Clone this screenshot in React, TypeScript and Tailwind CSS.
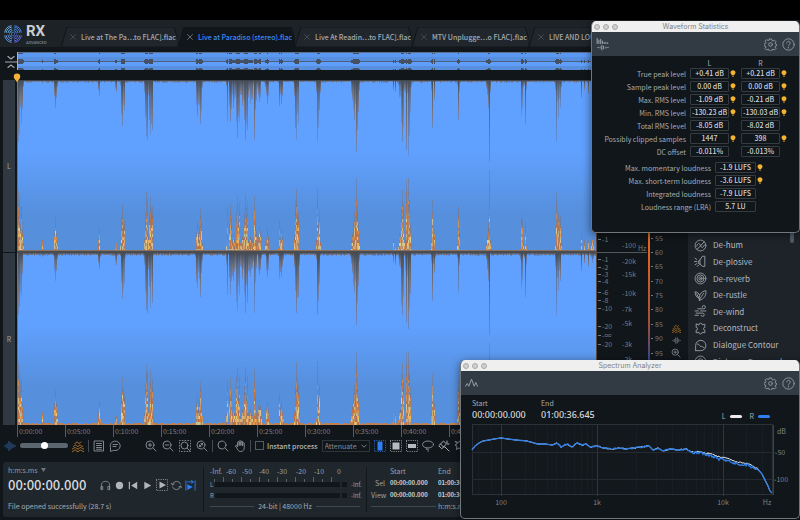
import React from "react";

const FONT = "font-['Noto_Sans_CJK_SC','Noto_Sans',sans-serif]";

/* ---------- waveform data ---------- */

const PLOT_W = 579;
const PLOT_H = 345;
const MID = 173;

// [x, half width, height at the bottom edge, depth at the top edge]
const PEAKS: [number, number, number, number][] = [
  [1, 1, 62, 62], [2, 1, 56, 54], [4, 1, 46, 44], [25, 0, 14, 4],
  [38, 1, 36, 28], [39, 0, 12, 18], [81, 0, 14, 10], [82, 0, 24, 16],
  [98, 0, 7, 9], [99, 0, 9, 12], [105, 1, 47, 46], [107, 0, 32, 30],
  [129, 1, 60, 57], [130, 0, 54, 60], [133, 1, 55, 55], [135, 0, 46, 50],
  [180, 1, 30, 36], [183, 1, 43, 44], [210, 0, 44, 42], [213, 1, 48, 42],
  [216, 2, 18, 28], [220, 1, 57, 58], [222, 0, 50, 42], [225, 2, 16, 26],
  [228, 1, 58, 60], [230, 0, 50, 50], [233, 2, 16, 24], [237, 0, 56, 60],
  [238, 1, 30, 30], [242, 1, 26, 22], [250, 1, 24, 24], [262, 0, 32, 26],
  [264, 1, 24, 24], [279, 1, 63, 60], [281, 0, 40, 44], [300, 0, 64, 62],
  [301, 1, 30, 48], [302, 0, 42, 30], [335, 1, 20, 20], [337, 1, 40, 40],
  [339, 0, 74, 72], [340, 1, 46, 50], [376, 0, 13, 10], [378, 0, 10, 12],
  [384, 2, 28, 26], [385, 1, 62, 62], [389, 0, 72, 70], [391, 0, 74, 76],
  [392, 1, 52, 56], [415, 0, 52, 48], [417, 0, 22, 20], [441, 0, 46, 40],
  [442, 0, 20, 12], [471, 1, 30, 28], [472, 0, 82, 82], [504, 0, 38, 36],
  [505, 0, 32, 28], [508, 0, 30, 44], [539, 0, 60, 62], [541, 1, 39, 38],
  [543, 0, 36, 28], [564, 0, 18, 18], [567, 0, 12, 10], [571, 0, 12, 14], [575, 1, 14, 10],
];

function noise(n: number) {
  const s = Math.sin(n * 12.9898) * 43758.5453;
  return s - Math.floor(s);
}

type Bar = { x: number; up: number; down: number };

function makeBars(seed: number): Bar[] {
  const bars: Bar[] = [];
  for (let x = 0; x < PLOT_W; x++) {
    let up = 1 + noise(x + seed) * 1.4;
    let down = 1.5 + noise(x * 3 + seed) * 1.5;
    for (const [px, hw, u, d] of PEAKS) {
      const dist = Math.abs(x - px);
      if (dist > hw + 1) continue;
      const fall = dist === 0 ? 1 : dist <= hw ? 0.45 + noise(x + seed * 7) * 0.4 : noise(x + seed * 5) * 0.3;
      up = Math.max(up, u * fall);
      down = Math.max(down, d * fall);
    }
    bars.push({ x, up, down });
  }
  return bars;
}

const LEFT = makeBars(3);
const RIGHT = makeBars(11);

const HOT = ["#e8933c", "#f2b558", "#d57a38", "#ecd07a", "#c56f35"];
const WARM = ["#c9743c", "#b5714a", "#dd8a3e", "#9b7563", "#c08a58"];
const COOL = ["#7d7480", "#8a7473", "#6f7890", "#6c7fa6"];
const CELL = 3;

function FlameBar({ x, bottom, height }: { x: number; bottom: number; height: number }) {
  if (height < 5) return <rect x={x} y={bottom - height} width="1" height={height} fill="#bf8152" />;
  const cells = [];
  for (let h = 0; h < height; h += CELL) {
    const rel = h / height;
    const size = Math.min(CELL, height - h);
    const n = noise(x * 31 + h * 7 + bottom);
    const abs = h + n * 14;
    const set = abs < 34 && rel < 0.6 ? HOT : rel < 0.7 && abs < 52 ? WARM : COOL;
    cells.push(
      <rect
        key={h}
        x={x}
        y={bottom - h - size}
        width="1"
        height={size}
        fill={set[Math.floor(noise(x * 17 + h * 3 + bottom) * set.length)]}
        opacity={rel > 0.8 ? 0.55 : 0.62 + noise(x * 5 + h) * 0.38}
      />,
    );
  }
  return <g>{cells}</g>;
}

function Waveform() {
  return (
    <svg
      className="block min-h-0 w-full flex-1"
      viewBox={`0 0 ${PLOT_W} ${PLOT_H}`}
      preserveAspectRatio="none"
      shapeRendering="crispEdges"
      aria-label="Waveform"
    >
      <defs>
        <linearGradient id="sky" x1="0" y1="0" x2="0" y2="1">
          <stop offset="0" stopColor="#60a0fe" />
          <stop offset="0.42" stopColor="#60a0fe" />
          <stop offset="0.78" stopColor="#568fdc" />
          <stop offset="1" stopColor="#568fdc" />
        </linearGradient>
        <linearGradient id="smoke" x1="0" y1="0" x2="0" y2="1">
          <stop offset="0" stopColor="#454b54" />
          <stop offset="0.35" stopColor="#5a6577" />
          <stop offset="0.7" stopColor="#7b7680" />
          <stop offset="1" stopColor="#628ad0" />
        </linearGradient>
        <linearGradient id="haze" x1="0" y1="0" x2="0" y2="1">
          <stop offset="0" stopColor="#454b54" />
          <stop offset="0.3" stopColor="#5c6f92" />
          <stop offset="1" stopColor="#6090dd" />
        </linearGradient>
      </defs>
      {[
        { bars: LEFT, top: 0, bottom: MID - 1 },
        { bars: RIGHT, top: MID, bottom: PLOT_H },
      ].map(({ bars, top, bottom }) => (
        <g key={top}>
          <rect x="0" y={top} width={PLOT_W} height={bottom - top} fill="url(#sky)" />
          {bars.map((b) => (
            <g key={b.x}>
              <rect
                x={b.x}
                y={top}
                width="1"
                height={b.down}
                fill={noise(b.x + top) > 0.4 ? "url(#smoke)" : "url(#haze)"}
              />
              <FlameBar x={b.x} bottom={bottom} height={b.up} />
            </g>
          ))}
        </g>
      ))}
      <rect x="0" y="0" width="1" height={PLOT_H} fill="#77746f" />
      <rect x="0" y="0" width={PLOT_W} height="1" fill="#3f464e" />
      <rect x="0" y={MID - 3} width={PLOT_W} height="1" fill="#8a705f" />
      <rect x="0" y={MID - 2} width={PLOT_W} height="2" fill="#4b4c50" />
    </svg>
  );
}

function Overview() {
  return (
    <svg
      className="block h-[18px] w-full flex-none"
      viewBox={`0 0 ${PLOT_W} 18`}
      preserveAspectRatio="none"
      shapeRendering="crispEdges"
      aria-label="Overview"
    >
      <rect width={PLOT_W} height="9" fill="#5b98f1" />
      <rect y="5" width={PLOT_W} height="4" fill="#568fdf" />
      <rect y="9" width={PLOT_W} height="9" fill="#5f9ffb" />
      <rect y="14" width={PLOT_W} height="4" fill="#588fdf" />
      <rect y="9" width={PLOT_W} height="1" fill="#4c5f7d" />
      {LEFT.filter((b) => b.up > 6).map((b) => {
        const h = b.up > 20 ? 2 : 1;
        return (
          <g key={b.x} fill="#455062">
            <rect x={b.x} y={9 - h} width="1" height={h * 2 + 1} />
            <rect x={b.x} y="0" width="1" height={h} />
            <rect x={b.x} y={18 - h} width="1" height={h} />
          </g>
        );
      })}
      <rect width={PLOT_W} height="1" fill="#5b6f8f" />
      <rect width="1" height="18" fill="#c7b36c" />
    </svg>
  );
}

/* ---------- icons ---------- */

type IconProps = { className?: string; children: React.ReactNode };

function Icon({ className = "size-[14px] text-[#8b9299]", children }: IconProps) {
  return (
    <svg
      className={`block flex-none ${className}`}
      viewBox="0 0 24 24"
      fill="none"
      stroke="currentColor"
      strokeWidth="1.8"
      strokeLinecap="round"
      strokeLinejoin="round"
      aria-hidden="true"
    >
      {children}
    </svg>
  );
}

function Logo() {
  const quads = [
    { r: 0, c: "#3f86e6" },
    { r: 90, c: "#5a6be0" },
    { r: 180, c: "#5f8fd8" },
    { r: 270, c: "#5fa6d6" },
  ];
  return (
    <svg className="size-[18px] flex-none" viewBox="0 0 36 36" fill="none" strokeWidth="2" aria-hidden="true">
      {quads.map((q) => (
        <g key={q.r} transform={`rotate(${q.r} 18 18)`} stroke={q.c}>
          {[3.5, 7, 10.5, 14, 17].map((r) => (
            <path
              key={r}
              d={`M${18 + r * 0.17} ${18 - r * 0.985} A${r} ${r} 0 0 1 ${18 + r * 0.985} ${18 - r * 0.17}`}
            />
          ))}
        </g>
      ))}
    </svg>
  );
}

const flames = (
  <>
    <path d="M6 7c2 0 2-3 4-3s2 3 4 3 2-3 4-3" />
    <path d="M3 13c2 0 2-3 4-3s3 3 5 3 2-3 4-3 2 3 5 3" />
    <path d="M1 18c2 0 3-3 5-3s3 3 6 3 3-3 5-3 3 3 6 3" />
    <path d="M1 23c2 0 3-3 5-3s3 3 6 3 3-3 5-3 3 3 6 3" />
  </>
);

function Bulb() {
  return (
    <svg className="block h-[7px] w-[6px] flex-none" viewBox="0 0 12 14" aria-label="Marker">
      <path d="M6 .5C2.900.5 1 2.700 1 5.200c0 2.300 2 3.700 2.700 5.500h4.600C9 8.900 11 7.500 11 5.200 11 2.700 9.100.5 6 .5Z" fill="#f3b230" />
      <path d="M4.200 11.500h3.600L7 13.800H5Z" fill="#c98c22" />
    </svg>
  );
}

function GearIcon() {
  return (
    <Icon className="size-[13px] text-[#8d959d]">
      <circle cx="12" cy="12" r="3.400" />
      <path d="M10 1.800h4l.7 2.900 2 .9 2.600-1.600 2.800 2.800-1.600 2.600.8 2 2.900.7v0l-.1 2-2.800.7-.8 2 1.600 2.600-2.800 2.800-2.600-1.600-2 .8-.7 2.900h-4l-.7-2.900-2-.8-2.600 1.600-2.800-2.800 1.600-2.600-.8-2-2.900-.7v-3l2.900-.7.8-2-1.600-2.600 2.800-2.800 2.600 1.600 2-.9Z" />
    </Icon>
  );
}

function HelpIcon() {
  return (
    <Icon className="size-[13px] text-[#8d959d]">
      <circle cx="12" cy="12" r="10.500" />
      <path d="M8.800 9.200a3.200 3.200 0 1 1 4.800 2.800c-1.100.7-1.600 1.200-1.600 2.600" />
      <path d="M12 18v.1" strokeWidth="2.400" />
    </Icon>
  );
}

/* ---------- header ---------- */

const TABS = [
  "Live at The Pa…to FLAC].flac",
  "Live at Paradiso (stereo).flac",
  "Live At Readin…to FLAC].flac",
  "MTV Unplugge…o FLAC].flac",
  "LIVE AND LOUD",
];

function Header() {
  return (
    <header className="flex h-8 flex-none items-start bg-[#1d2227] shadow-[inset_0_-5px_0_#11161a]">
      <div className="flex w-[61px] flex-none items-center gap-1 pt-[2px] pl-1">
        <Logo />
        <div className="flex flex-col">
          <span className="font-['Roboto',sans-serif] text-[15px] leading-[18px] font-bold text-[#c9cdd1]">RX</span>
          <span className="font-['Roboto',sans-serif] text-[4px] leading-[5px] font-medium text-[#7f868d]">ADVANCED</span>
        </div>
      </div>
      <nav className="mt-[7px] flex min-w-0 flex-1 overflow-hidden">
        {TABS.map((t, i) => {
          const active = i === 1;
          return (
            <button
              key={t}
              className={`relative flex h-5 w-[117px] flex-none items-center gap-[5px] pl-[9px] text-[7px] leading-[10px] font-medium whitespace-nowrap ${
                active ? "text-[#3b8af5]" : "text-[#a4abb1]"
              }`}
            >
              <svg className="absolute inset-0 size-full" viewBox="0 0 117 20" preserveAspectRatio="none" aria-hidden="true">
                <path
                  d="M0 20 L6 0 H113 L117 12 V20 Z"
                  fill={active ? "#11161a" : "#20262b"}
                  stroke="#11161a"
                />
              </svg>
              <Icon className={`relative size-[6px] ${active ? "text-[#7d858c]" : "text-[#4c545b]"}`}>
                <path d="M2 2l20 20M22 2L2 22" strokeWidth="3" />
              </Icon>
              <span className="relative">{t}</span>
            </button>
          );
        })}
      </nav>
    </header>
  );
}

/* ---------- scales ---------- */

const AMP: [number, string][] = [
  [190, "-1"], [210, "-1"], [218, "-2"], [225, "-3"], [232, "-4"],
  [243, "-6"], [251, "-8"], [259, "-10"], [277, "-20"], [286, "-∞"], [295, "-20"],
];
const FREQ: [number, string][] = [
  [193, "-100"], [209, "-20k"], [222, "-15k"], [241, "-10k"], [257, "-7k"], [271, "-5k"], [292, "-3k"], [307, "-2k"],
];
const LEVEL: [number, string][] = [
  [186, "55"], [200, "60"], [214, "65"], [229, "70"], [243, "75"], [257, "80"], [272, "85"], [286, "90"], [301, "95"],
];

function Scales() {
  return (
    <div className="flex w-[92px] flex-none bg-[#11161a]">
      <svg className="h-[385px] w-[69px] flex-none text-[7px]" viewBox="0 0 69 385" fill="#737b82" aria-label="Scales">
        <defs>
          <linearGradient id="heat" x1="0" y1="0" x2="0" y2="1">
            <stop offset="0" stopColor="#f0a13a" />
            <stop offset="0.5" stopColor="#e0641f" />
            <stop offset="0.7" stopColor="#a4513a" />
            <stop offset="0.82" stopColor="#2c4689" />
            <stop offset="1" stopColor="#121a3c" />
          </linearGradient>
        </defs>
        <rect x="0" y="28" width="1" height="345" fill="#5a4a40" />
        <rect x="1" y="200" width="50" height="1" fill="#50575d" />
        {AMP.map(([y, t], i) => (
          <g key={i}>
            <rect x="2" y={y - 3} width="3" height="1" />
            <text x="6" y={y}>{t}</text>
          </g>
        ))}
        {FREQ.map(([y, t]) => (
          <text key={t} x="26" y={y + 3}>{t}</text>
        ))}
        <text x="42" y="199">Hz</text>
        <rect x="52" y="28" width="2" height="345" fill="url(#heat)" />
        {LEVEL.map(([y, t]) => (
          <g key={t}>
            <rect x="55" y={y} width="2" height="1" />
            <text x="59" y={y + 3}>{t}</text>
          </g>
        ))}
      </svg>
      <div className="flex flex-1 flex-col items-center gap-[3px] pt-[272px] pr-px">
        <Icon className="size-[9px] text-[#c98028]">{flames}</Icon>
        <Icon className="size-[9px] text-[#8b9299]">
          <path d="M2 12v0M6 9v6M10 5v14M14 5v14M18 9v6M22 12v0" />
        </Icon>
        <Icon className="size-[10px] text-[#8b9299]">
          <circle cx="10" cy="10" r="7.500" /><path d="M16 16l6 6M10 7v6M7 10h6" />
        </Icon>
      </div>
    </div>
  );
}

/* ---------- modules ---------- */

const MODULES: [string, React.ReactNode][] = [
  ["De-hum", <><circle cx="12" cy="12" r="10" /><path d="M5 13c2-6 5-6 7-1s5 5 7-1M6 19L19 5" /></>],
  ["De-plosive", <><path d="M20 3v18h-4l-5-4V9l4-6Z" /><path d="M11 9l-3 2v5l3 1M2 6l3 2M1 12h4M2 18l3-2M6 21l2-2" /></>],
  ["De-reverb", <><circle cx="12" cy="12" r="10" /><circle cx="12" cy="12" r="6.500" /><circle cx="12" cy="12" r="3" /><circle cx="12" cy="12" r="0.600" /></>],
  ["De-rustle", <><path d="M10 21C8 12 12 5 22 3c1 9-3 15-12 18ZM10 21c2-6 5-9 8-13" /><path d="M9 17C4 15 2 11 2 5c5 1 7 3 8 6M9 17L5 9" /></>],
  ["De-wind", <><path d="M7 7h11a3 3 0 1 0-3-3M2 11h6M12 11h10M4 15h12a3 3 0 1 1-3 4M2 19h6" /></>],
  ["Deconstruct", <path d="M9 5a3 3 0 1 1 6 0l5-1v6a2.500 2.500 0 1 0 0 5v5l-5-1a3 3 0 1 1-6 0l-5 1v-5a2.500 2.500 0 1 0 0-5V4Z" />],
  ["Dialogue Contour", <><path d="M3 21V12a9.500 9.500 0 1 1 9 9.500H3Z" /><path d="M6 9c4-1 4 6 8 5s3 3 5 3" /></>],
  ["Dialogue De-reverb", <><circle cx="12" cy="12" r="10" /><circle cx="12" cy="12" r="5" /></>],
];

function Modules() {
  return (
    <aside className="flex w-[112px] flex-none bg-[#1d2329]">
      <ul className="mt-[185px] grid h-[133px] min-w-0 flex-1 grid-rows-8 overflow-hidden pl-[6px]">
        {MODULES.map(([name, art]) => (
          <li key={name} className="flex min-h-0 items-center">
            <button className="flex items-center gap-[6px] text-[8px] leading-3 whitespace-nowrap text-[#b4bac0]">
              <Icon className="size-[13px] text-[#90979e]">{art}</Icon>
              {name}
            </button>
          </li>
        ))}
      </ul>
      <div className="mt-[168px] mr-[6px] h-[23px] w-1 rounded-full bg-[#505c66]" />
    </aside>
  );
}

/* ---------- editor ---------- */

const TIMES = Array.from({ length: 12 }, (_, i) => `0:${String(i * 5).padStart(2, "0")}:00`);

function Editor() {
  return (
    <main className="flex min-h-0 flex-1 overflow-hidden bg-[#11161a]">
      <div className="flex w-[17px] flex-none flex-col items-start pl-[3px]">
        <div className="flex h-7 w-[15px] items-start justify-center pt-1">
          <Icon className="size-[12px] text-[#a2a8ad]">
            <path d="M6 1l6 5 6-5M1 12h22M6 23l6-5 6 5" strokeWidth="2.400" />
          </Icon>
        </div>
        <div className="flex w-3 flex-1 items-center justify-center border-b border-[#11161a] bg-[#303941] text-[7px] text-[#9aa1a7]">
          L
        </div>
        <div className="flex w-3 flex-1 items-center justify-center bg-[#303941] text-[7px] text-[#9aa1a7]">
          R
        </div>
        <div className="h-3 w-3 flex-none" />
      </div>
      <section className="relative flex min-w-0 flex-1 flex-col">
        <Overview />
        <div className="h-[10px] flex-none" />
        <Waveform />
        <div className="flex h-3 flex-none overflow-hidden">
          {TIMES.map((t) => (
            <span key={t} className="w-12 flex-none border-l border-[#555d64] pl-px text-[7px] leading-3 text-[#7b8288]">
              {t}
            </span>
          ))}
        </div>
        <svg className="absolute top-[21px] -left-1 h-[10px] w-2" viewBox="0 0 16 20" aria-label="Playhead">
          <path d="M8 1a6.500 6.500 0 0 1 6.500 6.500C14.500 12 10 14 8 19 6 14 1.500 12 1.500 7.500A6.500 6.500 0 0 1 8 1Z" fill="#f3b13a" />
        </svg>
      </section>
      <Scales />
      <Modules />
    </main>
  );
}

/* ---------- toolbar ---------- */

function ToolButton({ label, children }: { label: string; children: React.ReactNode }) {
  return (
    <button aria-label={label} className="flex-none">
      {children}
    </button>
  );
}

const lens = <><circle cx="10" cy="10" r="8" /><path d="M16 16l6 6" /></>;

function Toolbar() {
  return (
    <div className="flex h-5 flex-none items-center overflow-hidden bg-[#11161a] pb-[3px] pl-1">
      <Icon className="size-3 text-[#3a78c9]">
        <path d="M2 11v2M6 8v8M10 3v18M14 6v12M18 9v6M22 11v2" strokeWidth="1.500" />
      </Icon>
      <input
        type="range"
        aria-label="Waveform and spectrogram blend"
        defaultValue={50}
        className="mx-1 h-[7px] w-12 flex-none appearance-none bg-transparent [&::-webkit-slider-runnable-track]:h-[5px] [&::-webkit-slider-runnable-track]:rounded-full [&::-webkit-slider-runnable-track]:bg-[#5c666e] [&::-webkit-slider-thumb]:-mt-px [&::-webkit-slider-thumb]:size-[7px] [&::-webkit-slider-thumb]:appearance-none [&::-webkit-slider-thumb]:rounded-full [&::-webkit-slider-thumb]:bg-white"
      />
      <ToolButton label="Spectrogram"><Icon className="size-3 text-[#c98028]">{flames}</Icon></ToolButton>
      <span className="mx-1 h-3 w-px bg-[#434b52]" />
      <div className="flex gap-1">
        <ToolButton label="Report">
          <Icon className="size-3 text-[#8b9299]"><path d="M3 2h18v20H3ZM7 7h10M7 11h10M7 15h10M7 18.500h10" /></Icon>
        </ToolButton>
        <ToolButton label="Comment">
          <Icon className="size-3 text-[#8b9299]"><path d="M3 22v-7a10 9.500 0 1 1 7 6Z" /><path d="M8 9h9M8 13h6" /></Icon>
        </ToolButton>
      </div>
      <div className="ml-6 flex gap-[5px]">
        <ToolButton label="Zoom in"><Icon className="size-3 text-[#8b9299]">{lens}<path d="M10 6.500v7M6.500 10h7" /></Icon></ToolButton>
        <ToolButton label="Zoom out"><Icon className="size-3 text-[#8b9299]">{lens}<path d="M6.500 10h7" /></Icon></ToolButton>
        <ToolButton label="Zoom selection"><Icon className="size-3 text-[#8b9299]"><path d="M1 1h22v22H1Z" strokeDasharray="1.500 4" /><circle cx="11" cy="11" r="7" /><path d="M16 16l6 6" /></Icon></ToolButton>
        <ToolButton label="Zoom all"><Icon className="size-3 text-[#8b9299]">{lens}<path d="M7 13l6-6M7 10v3h3M10 7h3v3" /></Icon></ToolButton>
      </div>
      <span className="mx-1 h-3 w-px bg-[#434b52]" />
      <div className="flex gap-[5px]">
        <ToolButton label="Zoom tool"><Icon className="size-3 text-[#8b9299]">{lens}</Icon></ToolButton>
        <ToolButton label="Hand tool">
          <Icon className="size-3 text-[#8b9299]">
            <path d="M7 13V5a1.700 1.700 0 0 1 3.400 0v6V3a1.700 1.700 0 0 1 3.400 0v8V4a1.700 1.700 0 0 1 3.400 0v8V7a1.700 1.700 0 0 1 3.400 0v8c0 5-3 8-7 8-5 0-6-3-8-7l-3-4c1-2 3-2 5 1" />
          </Icon>
        </ToolButton>
      </div>
      <span className="mx-1 h-3 w-px bg-[#434b52]" />
      <label className="flex flex-none items-center gap-[3px] text-[7px] leading-[10px] font-medium text-[#b0b6bb]">
        <input type="checkbox" className="size-[9px] appearance-none border border-[#535b62]" />
        Instant process
      </label>
      <div className="relative ml-1 flex-none">
        <select
          aria-label="Process type"
          className="block h-3 w-12 appearance-none border border-[#2e353b] bg-[#11161a] pl-[2px] text-[7px] leading-[10px] text-[#858c93]"
        >
          <option>Attenuate</option>
        </select>
        <svg className="pointer-events-none absolute top-[4px] right-[3px] h-1 w-[6px]" viewBox="0 0 12 8" fill="none" stroke="#858c93" strokeWidth="1.800" aria-hidden="true">
          <path d="M1 1.500l5 5 5-5" />
        </svg>
      </div>
      <div className="ml-1 flex gap-1">
        {[
          { n: "Time selection", c: "text-[#2f7ff2]", r: <rect x="7" y="3" width="10" height="18" fill="currentColor" stroke="none" /> },
          { n: "Time-frequency selection", c: "text-[#b4bac0]", r: <rect x="5" y="5" width="14" height="14" fill="currentColor" stroke="none" /> },
          { n: "Frequency selection", c: "text-[#b4bac0]", r: <rect x="4" y="8" width="16" height="8" fill="currentColor" stroke="none" /> },
        ].map((s) => (
          <ToolButton key={s.n} label={s.n}>
            <Icon className={`size-3 ${s.c}`}>
              <path d="M1 1h22v22H1Z" strokeDasharray="0.500 4" strokeWidth="1.500" />
              {s.r}
            </Icon>
          </ToolButton>
        ))}
        <ToolButton label="Lasso"><Icon className="size-3 text-[#8b9299]"><ellipse cx="12" cy="9" rx="11" ry="7" /><path d="M10 16c-3 1-2 4 1 3s2 2 1 4" /></Icon></ToolButton>
        <ToolButton label="Brush"><Icon className="size-3 text-[#b4bac0]"><path d="M2 11L11 2l6 6-9 9ZM5 8l7 7M13 13l9 9" /><path d="M18 2v4M22 8h-3" /></Icon></ToolButton>
        <ToolButton label="Magic wand"><Icon className="size-3 text-[#8b9299]"><path d="M3 3l5 2 4-3 1 5 5 2-4 4 1 5-5-2-5 3 1-6-4-3 4-2Z" /></Icon></ToolButton>
      </div>
    </div>
  );
}

/* ---------- transport ---------- */

const METER: [number, string][] = [
  [6, "-Inf."], [21, "-60"], [37, "-50"], [54, "-40"], [72, "-30"], [91, "-20"], [109, "-10"], [129, "0"],
];

function Transport() {
  return (
    <footer className="flex-none bg-[#11161a] px-[3px] pt-[5px] pb-[3px]">
      <div className="flex h-[55px] overflow-hidden rounded-[3px] bg-[#1f262c]">
        <div className="flex w-[200px] flex-none flex-col pt-[3px] pl-[5px]">
          <button className="flex items-center gap-[3px] text-[7px] leading-[10px] text-[#959ca2]">
            h:m:s.ms
            <svg className="h-1 w-[5px]" viewBox="0 0 10 8" fill="#6d757c" aria-hidden="true"><path d="M0 0h10L5 8Z" /></svg>
          </button>
          <div className="flex h-5 items-center">
            <span className="w-[92px] flex-none text-[13px] leading-5 font-medium text-[#d5d9dc]">00:00:00.000</span>
            <div className="flex items-center gap-[3px]">
              <ToolButton label="Monitor"><Icon className="size-[11px] text-[#8b9299]"><path d="M3 20v-8a9 9 0 0 1 18 0v8M3 14h3v7H3ZM18 14h3v7h-3Z" /></Icon></ToolButton>
              <ToolButton label="Record"><Icon className="size-[11px] text-[#b0b6bb]"><circle cx="12" cy="12" r="8" fill="currentColor" stroke="none" /></Icon></ToolButton>
              <ToolButton label="Rewind"><Icon className="size-[11px] text-[#b0b6bb]"><path d="M3 5v14" strokeWidth="2.500" /><path d="M20 4v16L7 12Z" fill="currentColor" stroke="none" /></Icon></ToolButton>
              <ToolButton label="Play"><Icon className="size-[11px] text-[#b0b6bb]"><path d="M5 4v16l15-8Z" fill="currentColor" stroke="none" /></Icon></ToolButton>
              <ToolButton label="Play selection"><Icon className="size-3 text-[#b0b6bb]"><path d="M1 1h22v22H1Z" strokeDasharray="0.500 4" strokeWidth="1.500" /><path d="M7 5v14l13-7Z" fill="currentColor" stroke="none" /></Icon></ToolButton>
              <ToolButton label="Loop"><Icon className="size-[11px] text-[#8b9299]"><path d="M3 10a9.500 9.500 0 0 1 18-1M21 14a9.500 9.500 0 0 1-18 1M1 7l2 4 4-2M23 17l-2-4-4 2" /></Icon></ToolButton>
              <ToolButton label="Follow playhead"><Icon className="size-[11px] text-[#2f7ff2]"><path d="M2 2v20M22 2v20M6 4h12M14 1l4 3-4 3" strokeWidth="2" /><path d="M5 9v13l12-6.500Z" fill="currentColor" stroke="none" /></Icon></ToolButton>
            </div>
          </div>
          <p className="mt-[6px] text-[7px] leading-[10px] text-[#a5acb2]">File opened successfully (28.7 s)</p>
        </div>
        <div className="my-[5px] w-px flex-none bg-[#12171b]" />
        <div className="flex w-[162px] flex-none flex-col pt-1 pl-[6px]">
          <svg className="h-[34px] w-[153px]" viewBox="0 0 153 34" fill="#9aa1a7" aria-label="Output meter">
            <g className="text-[7px]" textAnchor="middle">
              {METER.map(([x, t]) => <text key={t} x={x} y="8">{t}</text>)}
            </g>
            {Array.from({ length: 14 }, (_, i) => (
              <rect key={i} x={4 + i * 9} y={i % 2 ? 11 : 13} width="1" height={i % 2 ? 5 : 3} fill="#59616a" />
            ))}
            <g fill="#11161a">
              <rect x="5" y="16" width="125" height="5" /><rect x="132" y="16" width="5" height="5" />
              <rect x="5" y="27" width="125" height="5" /><rect x="132" y="27" width="5" height="5" />
            </g>
            <g className="text-[6px]">
              <text x="0" y="21">L</text><text x="0" y="32">R</text>
              <text x="141" y="21">-Inf.</text><text x="141" y="32">-Inf.</text>
            </g>
          </svg>
          <div className="mt-px flex w-[150px] items-center gap-1 text-[7px] leading-[10px] text-[#a5acb2]">
            <span className="h-px flex-1 bg-[#3f4950]" />
            24-bit | 48000 Hz
            <span className="h-px flex-1 bg-[#3f4950]" />
          </div>
        </div>
        <div className="my-[5px] w-px flex-none bg-[#12171b]" />
        <div className="flex flex-none flex-col pt-[3px] pl-[4px]">
          <table className="w-[112px] table-fixed text-left text-[7px] leading-[10px] text-[#9aa1a7]">
            <colgroup><col className="w-[19px]" /><col className="w-[48px]" /><col className="w-[45px]" /></colgroup>
            <thead>
              <tr className="h-3"><th /><th className="p-0 font-normal">Start</th><th className="p-0 font-normal">End</th></tr>
            </thead>
            <tbody>
              {["Sel", "View"].map((n) => (
                <tr key={n} className="h-3">
                  <th className="p-0 pr-[5px] text-right font-normal">{n}</th>
                  <td className="p-0 text-[6px] font-bold text-[#cdd1d4]">00:00:00.000</td>
                  <td className="p-0 text-[6px] font-bold text-[#cdd1d4]">01:00:36.645</td>
                </tr>
              ))}
            </tbody>
          </table>
          <div className="flex w-[112px] items-center gap-[2px] text-[7px] leading-[10px] text-[#9aa1a7]">
            <span className="h-px w-[65px] bg-[#3f4950]" />
            h:m:s.ms
          </div>
        </div>
      </div>
    </footer>
  );
}

/* ---------- floating windows ---------- */

function FloatingWindow({ title, icon, className, children }: { title: string; icon: React.ReactNode; className: string; children: React.ReactNode }) {
  return (
    <section className={`absolute flex flex-col overflow-hidden rounded-[5px] border border-t-0 border-[#70767b] bg-[#11161a] shadow-[0_2px_8px_rgba(0,0,0,0.5)] ${className}`}>
      <div className="grid h-[11px] flex-none grid-cols-[1fr_auto_1fr] items-center bg-[#f0eff0] px-[2px]">
        <div className="flex gap-[3px]">
          {["Close", "Minimize", "Zoom"].map((n) => (
            <button key={n} aria-label={n} className="size-[6px] rounded-full border border-[#a9a9a9] bg-[#cfcfcf]" />
          ))}
        </div>
        <h2 className="font-['Inter',sans-serif] text-[7px] leading-[10px] text-[#808080]">{title}</h2>
      </div>
      <div className="flex h-6 flex-none items-center gap-[5px] bg-[#323b44] px-1">
        {icon}
        <button aria-label="Settings" className="ml-auto"><GearIcon /></button>
        <button aria-label="Help"><HelpIcon /></button>
      </div>
      {children}
    </section>
  );
}

const STATS: [string, string, string, boolean][] = [
  ["True peak level", "+0.41 dB", "+0.21 dB", true],
  ["Sample peak level", "0.00 dB", "0.00 dB", true],
  ["Max. RMS level", "-1.09 dB", "-0.21 dB", true],
  ["Min. RMS level", "-130.23 dB", "-130.03 dB", true],
  ["Total RMS level", "-8.05 dB", "-8.02 dB", false],
  ["Possibly clipped samples", "1447", "398", true],
  ["DC offset", "-0.011%", "-0.013%", false],
];

const LOUDNESS: [string, string, boolean][] = [
  ["Max. momentary loudness", "-1.9 LUFS", true],
  ["Max. short-term loudness", "-3.6 LUFS", true],
  ["Integrated loudness", "-7.9 LUFS", false],
  ["Loudness range (LRA)", "5.7 LU", false],
];

function Value({ text, mark, width }: { text: string; mark: boolean; width: string }) {
  return (
    <div className="flex items-center gap-px">
      <span className={`flex h-[11px] items-center justify-center rounded-[1px] border border-[#343b41] text-[7px] leading-[9px] font-medium whitespace-nowrap text-[#d0d4d8] ${width}`}>
        {text}
      </span>
      {mark && <Bulb />}
    </div>
  );
}

function StatisticsWindow() {
  return (
    <FloatingWindow
      title="Waveform Statistics"
      className="top-[21px] right-0 h-[212px] w-[209px]"
      icon={
        <Icon className="size-[14px] text-[#98a0a7]">
          <path d="M2 2v9M5 5v6M8 4v7M11 7v4M14 9v2M17 9v2M20 10v1" />
          <path d="M3 18h1M7 17v2M10 14v8M13 16v4M17 17v2M20 18h1" />
        </Icon>
      }
    >
      <table className="mt-[3px] w-[200px] flex-none table-fixed text-[7px] leading-[10px] text-[#a5acb2]">
        <colgroup><col className="w-[98px]" /><col className="w-[51px]" /><col className="w-[51px]" /></colgroup>
        <thead>
          <tr className="h-2 leading-[8px]">
            <th className="p-0" />
            <th className="p-0 pr-3 font-normal">L</th>
            <th className="p-0 pr-3 font-normal">R</th>
          </tr>
        </thead>
        <tbody>
          {STATS.map(([n, l, r, mark]) => (
            <tr key={n} className="h-[13px]">
              <th className="p-0 pr-1 text-right font-normal whitespace-nowrap">{n}</th>
              <td className="p-0"><Value text={l} mark={mark} width="w-[39px]" /></td>
              <td className="p-0"><Value text={r} mark={mark} width="w-[39px]" /></td>
            </tr>
          ))}
        </tbody>
      </table>
      <table className="mt-[3px] w-[180px] flex-none table-fixed text-[7px] leading-[10px] text-[#a5acb2]">
        <colgroup><col className="w-[123px]" /><col className="w-[57px]" /></colgroup>
        <tbody>
          {LOUDNESS.map(([n, v, mark]) => (
            <tr key={n} className="h-[13px]">
              <th className="p-0 pr-1 text-right font-normal whitespace-nowrap">{n}</th>
              <td className="p-0"><Value text={v} mark={mark} width="w-[41px]" /></td>
            </tr>
          ))}
        </tbody>
      </table>
    </FloatingWindow>
  );
}

const CURVE: [number, number][] = [
  [0, 25], [3, 21], [7, 18], [11, 16], [17, 15], [22, 14], [29, 13], [36, 14], [44, 15], [55, 16], [62, 18], [66, 19],
  [73, 19], [80, 20], [85, 18], [89, 22], [95, 19], [100, 22], [105, 18], [110, 20], [114, 19], [118, 22], [125, 21],
  [132, 23], [140, 24], [147, 23], [154, 24], [162, 23], [170, 22], [177, 21], [181, 25], [186, 23], [191, 26], [198, 24],
  [206, 25], [214, 24], [220, 27], [228, 27], [234, 28], [240, 29], [247, 32], [254, 33], [262, 36], [270, 38], [276, 38],
  [281, 41], [286, 44], [290, 49], [293, 55], [296, 61], [298, 66], [300, 68],
];

function curvePath(shift: number, jitter: number) {
  const pts: string[] = [];
  for (let x = 0; x <= 300; x++) {
    const i = Math.max(1, CURVE.findIndex(([cx]) => cx >= x));
    const [x0, y0] = CURVE[i - 1];
    const [x1, y1] = CURVE[i];
    const y = y0 + ((y1 - y0) * (x - x0)) / (x1 - x0);
    const rough = x > 80 && x < 286 ? (noise(x * 5 + shift) - 0.5) * (x > 220 ? jitter : 1.2) : 0;
    const off = x > 215 && x < 290 ? shift * Math.min(1, (x - 215) / 25, (290 - x) / 12) : 0;
    pts.push(`${x} ${(y + rough + off).toFixed(1)}`);
  }
  return "M" + pts.join("L");
}

const GRID = [6, 19, 29, 53, 63, 75, 84, 94, 102, 109, 115, 120, 164, 184, 200, 214, 224, 232, 240, 246, 274, 290];

function SpectrumWindow() {
  return (
    <FloatingWindow
      title="Spectrum Analyzer"
      className="right-0 bottom-px h-[159px] w-[340px]"
      icon={
        <Icon className="size-[13px] text-[#98a0a7]">
          <path d="M1 17l3-5 3 5 5-13 5 13 3-7 3 7" />
        </Icon>
      }
    >
      <div className="flex min-h-0 flex-1 flex-col px-[11px] pt-[3px]">
        <div className="flex items-start">
          <dl className="flex flex-1 text-[7px] leading-[10px] text-[#a5acb2]">
            <div className="w-[69px]">
              <dt>Start</dt>
              <dd className="font-['Noto_Sans',sans-serif] text-[9px] leading-[13px] font-medium text-[#d5d9dc]">00:00:00.000</dd>
            </div>
            <div>
              <dt>End</dt>
              <dd className="font-['Noto_Sans',sans-serif] text-[9px] leading-[13px] font-medium text-[#d5d9dc]">01:00:36.645</dd>
            </div>
          </dl>
          <div className="flex items-center gap-1 pt-[13px] pr-[18px] text-[7px] leading-[10px] text-[#a5acb2]">
            L<span className="mr-1 h-[3px] w-3 rounded-full bg-[#ececec]" />
            R<span className="h-[3px] w-3 rounded-full bg-[#2f7ff2]" />
          </div>
        </div>
        <svg className="-mt-[2px] h-[85px] w-full flex-none overflow-visible text-[7px]" viewBox="0 0 316 85" fill="#7b8389" aria-label="Spectrum">
          <rect x="0.5" y="5.5" width="300" height="70" fill="#13181c" stroke="#2b3136" />
          {GRID.map((x) => <rect key={x} x={x} y="6" width="1" height="69" fill="#171d22" />)}
          {[29, 125, 251].map((x) => <rect key={x} x={x} y="6" width="1" height="71" fill="#2e353b" />)}
          {[33, 60].map((y) => <rect key={y} x="0" y={y} width="304" height="1" fill="#242a30" />)}
          <rect x="301" y="6" width="1" height="70" fill="#39414a" />
          <g transform="translate(0 6)" fill="none" strokeWidth="1">
            <path d={curvePath(0, 1.6)} stroke="#dfe5ec" />
            <path d={curvePath(2, 2.4)} stroke="#2f7fe8" strokeWidth="1.300" />
          </g>
          <text x="305" y="15">dB</text>
          <text x="303" y="36">-50</text>
          <text x="302" y="63">-100</text>
          <text x="29" y="86" textAnchor="middle">100</text>
          <text x="125" y="86" textAnchor="middle">1k</text>
          <text x="251" y="86" textAnchor="middle">10k</text>
          <text x="295" y="86" textAnchor="middle">Hz</text>
        </svg>
      </div>
    </FloatingWindow>
  );
}

export default function App() {
  return (
    <div className={`relative flex h-screen w-full flex-col overflow-hidden bg-black pt-5 ${FONT}`}>
      <Header />
      <Editor />
      <Toolbar />
      <Transport />
      <StatisticsWindow />
      <SpectrumWindow />
    </div>
  );
}
